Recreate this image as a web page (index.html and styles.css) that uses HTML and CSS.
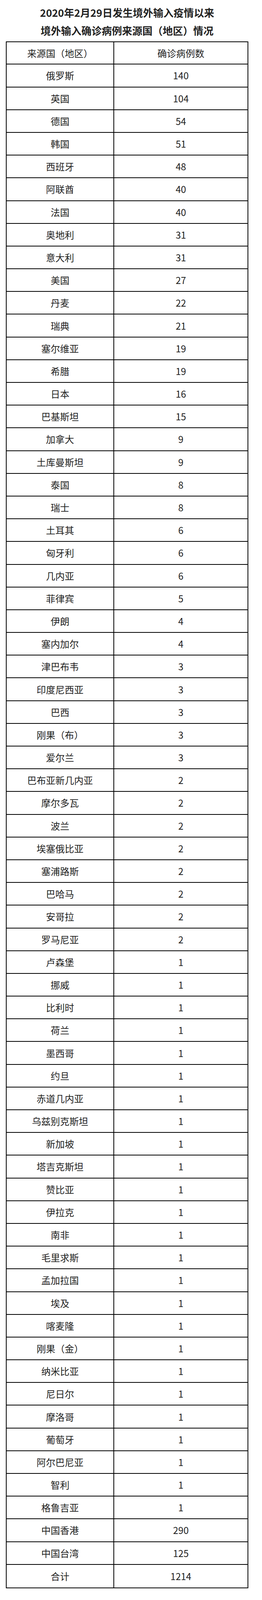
FILE: index.html
```html
<!DOCTYPE html>
<html lang="zh-CN">
<head>
<meta charset="utf-8">
<title>境外输入确诊病例来源国（地区）情况</title>
<link rel="stylesheet" href="styles.css">
</head>
<body>
<div class="page">
  <header class="titles">
    <p class="title">2020年2月29日发生境外输入疫情以来</p>
    <p class="title">境外输入确诊病例来源国（地区）情况</p>
  </header>
  <div class="table">
    <div class="cell head">来源国（地区）</div><div class="cell head num">确诊病例数</div>
    <div class="cell">俄罗斯</div><div class="cell num">140</div>
    <div class="cell">英国</div><div class="cell num">104</div>
    <div class="cell">德国</div><div class="cell num">54</div>
    <div class="cell">韩国</div><div class="cell num">51</div>
    <div class="cell">西班牙</div><div class="cell num">48</div>
    <div class="cell">阿联酋</div><div class="cell num">40</div>
    <div class="cell">法国</div><div class="cell num">40</div>
    <div class="cell">奥地利</div><div class="cell num">31</div>
    <div class="cell">意大利</div><div class="cell num">31</div>
    <div class="cell">美国</div><div class="cell num">27</div>
    <div class="cell">丹麦</div><div class="cell num">22</div>
    <div class="cell">瑞典</div><div class="cell num">21</div>
    <div class="cell">塞尔维亚</div><div class="cell num">19</div>
    <div class="cell">希腊</div><div class="cell num">19</div>
    <div class="cell">日本</div><div class="cell num">16</div>
    <div class="cell">巴基斯坦</div><div class="cell num">15</div>
    <div class="cell">加拿大</div><div class="cell num">9</div>
    <div class="cell">土库曼斯坦</div><div class="cell num">9</div>
    <div class="cell">泰国</div><div class="cell num">8</div>
    <div class="cell">瑞士</div><div class="cell num">8</div>
    <div class="cell">土耳其</div><div class="cell num">6</div>
    <div class="cell">匈牙利</div><div class="cell num">6</div>
    <div class="cell">几内亚</div><div class="cell num">6</div>
    <div class="cell">菲律宾</div><div class="cell num">5</div>
    <div class="cell">伊朗</div><div class="cell num">4</div>
    <div class="cell">塞内加尔</div><div class="cell num">4</div>
    <div class="cell">津巴布韦</div><div class="cell num">3</div>
    <div class="cell">印度尼西亚</div><div class="cell num">3</div>
    <div class="cell">巴西</div><div class="cell num">3</div>
    <div class="cell">刚果（布）</div><div class="cell num">3</div>
    <div class="cell">爱尔兰</div><div class="cell num">3</div>
    <div class="cell">巴布亚新几内亚</div><div class="cell num">2</div>
    <div class="cell">摩尔多瓦</div><div class="cell num">2</div>
    <div class="cell">波兰</div><div class="cell num">2</div>
    <div class="cell">埃塞俄比亚</div><div class="cell num">2</div>
    <div class="cell">塞浦路斯</div><div class="cell num">2</div>
    <div class="cell">巴哈马</div><div class="cell num">2</div>
    <div class="cell">安哥拉</div><div class="cell num">2</div>
    <div class="cell">罗马尼亚</div><div class="cell num">2</div>
    <div class="cell">卢森堡</div><div class="cell num">1</div>
    <div class="cell">挪威</div><div class="cell num">1</div>
    <div class="cell">比利时</div><div class="cell num">1</div>
    <div class="cell">荷兰</div><div class="cell num">1</div>
    <div class="cell">墨西哥</div><div class="cell num">1</div>
    <div class="cell">约旦</div><div class="cell num">1</div>
    <div class="cell">赤道几内亚</div><div class="cell num">1</div>
    <div class="cell">乌兹别克斯坦</div><div class="cell num">1</div>
    <div class="cell">新加坡</div><div class="cell num">1</div>
    <div class="cell">塔吉克斯坦</div><div class="cell num">1</div>
    <div class="cell">赞比亚</div><div class="cell num">1</div>
    <div class="cell">伊拉克</div><div class="cell num">1</div>
    <div class="cell">南非</div><div class="cell num">1</div>
    <div class="cell">毛里求斯</div><div class="cell num">1</div>
    <div class="cell">孟加拉国</div><div class="cell num">1</div>
    <div class="cell">埃及</div><div class="cell num">1</div>
    <div class="cell">喀麦隆</div><div class="cell num">1</div>
    <div class="cell">刚果（金）</div><div class="cell num">1</div>
    <div class="cell">纳米比亚</div><div class="cell num">1</div>
    <div class="cell">尼日尔</div><div class="cell num">1</div>
    <div class="cell">摩洛哥</div><div class="cell num">1</div>
    <div class="cell">葡萄牙</div><div class="cell num">1</div>
    <div class="cell">阿尔巴尼亚</div><div class="cell num">1</div>
    <div class="cell">智利</div><div class="cell num">1</div>
    <div class="cell">格鲁吉亚</div><div class="cell num">1</div>
    <div class="cell">中国香港</div><div class="cell num">290</div>
    <div class="cell">中国台湾</div><div class="cell num">125</div>
    <div class="cell last">合计</div><div class="cell num last">1214</div>
  </div>
</div>
</body>
</html>
```

FILE: styles.css
```css
html, body {
  margin: 0;
  padding: 0;
  background: #ffffff;
}

body {
  font-family: "Noto Sans CJK SC", "Noto Sans", sans-serif;
  color: #222222;
}

.page {
  width: 670px;
  padding: 9px 0 0 15px;
  box-sizing: border-box;
}

.titles {
  width: 620px;
  margin: 0 0 5px 0;
  text-align: center;
}

.title {
  margin: 0;
  font-size: 26px;
  font-weight: 700;
  line-height: 46px;
  color: #222222;
}

.table {
  width: 620px;
  box-sizing: border-box;
  border: 2px solid #000000;
  display: grid;
  grid-template-columns: 275px 341px;
  grid-template-rows: 57.4px;
  grid-auto-rows: 58.2px;
}

.cell {
  display: flex;
  align-items: center;
  justify-content: center;
  box-sizing: border-box;
  border-bottom: 2px solid #000000;
  border-right: 2px solid #000000;
  font-size: 24px;
  line-height: 1;
  color: #222222;
}

.cell.num {
  border-right: none;
}

.cell.last {
  border-bottom: none;
}
```
